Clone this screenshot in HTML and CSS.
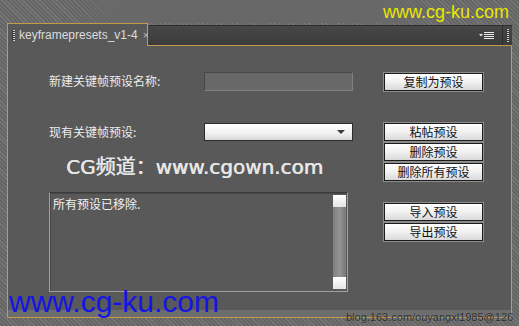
FILE: index.html
```html
<!DOCTYPE html>
<html>
<head>
<meta charset="utf-8">
<link rel="stylesheet" href="styles.css">
</head>
<body>
<div class="window">
  <div class="topstrip"></div>
  <div class="tabbar">
    <div class="tab">
      <span class="grip"></span>
      <span class="tab-title">keyframepresets_v1-4</span>
      <span class="tab-close">×</span>
    </div>
    <div class="tabfill">
      <svg class="menu-icon" width="16" height="8" viewBox="0 0 16 8">
        <polygon points="0,2 4,2 2,4.5" fill="#e8e8e8"/>
        <rect x="5" y="0" width="10" height="1" fill="#e8e8e8"/>
        <rect x="5" y="2" width="10" height="1" fill="#e8e8e8"/>
        <rect x="5" y="4" width="10" height="1" fill="#e8e8e8"/>
        <rect x="5" y="6" width="10" height="1" fill="#e8e8e8"/>
      </svg>
      <span class="sep"></span>
      <span class="grip grip-right"></span>
    </div>
  </div>
  <div class="panel">
    <div class="content">
      <div class="row row1">
        <div class="lbl">新建关键帧预设名称:</div>
        <div class="input"></div>
        <div class="btn btn-first">复制为预设</div>
      </div>
      <div class="row row2">
        <div class="lbl lbl2">现有关键帧预设:</div>
        <div class="dropdown"><span class="arrow"></span></div>
        <div class="btns">
          <div class="btn">粘帖预设</div>
          <div class="btn">删除预设</div>
          <div class="btn">删除所有预设</div>
        </div>
      </div>
      <div class="row row3">
        <div class="list">
          <div class="list-text">所有预设已移除.</div>
          <div class="scroll">
            <div class="thumb"></div>
            <div class="track"></div>
            <div class="thumb"></div>
          </div>
        </div>
        <div class="btns btns2">
          <div class="btn">导入预设</div>
          <div class="btn">导出预设</div>
        </div>
      </div>
    </div>
    <div class="foot"></div>
  </div>
</div>
<div class="wm wm-top">www.cg-ku.com</div>
<div class="wm wm-cg">CG频道：www.cgown.com</div>
<div class="wm wm-bottom">www.cg-ku.com</div>
<div class="wm wm-blog">blog.163.com/ouyangxl1985@126</div>
</body>
</html>
```
FILE: styles.css
```css
html, body {
  margin: 0;
  padding: 0;
}
body {
  width: 519px;
  height: 326px;
  overflow: hidden;
  position: relative;
  font-family: "Noto Sans CJK SC", "Liberation Sans", sans-serif;
  background-color: #6c6c6c;
  background-image: repeating-linear-gradient(45deg, #777777 0px, #777777 1px, #666666 1px, #666666 3px);
}
.window {
  padding: 0 7px 0 7px;
  height: 326px;
  box-sizing: border-box;
}
.topstrip {
  height: 23px;
  margin: 0 -7px;
  background: linear-gradient(90deg, rgba(104,104,104,0) 0px, rgba(104,104,104,0) 70px, #686868 130px, #686868 370px, rgba(104,104,104,0) 440px);
}
.tabbar {
  display: flex;
  align-items: flex-end;
  height: 23px;
}
.tab {
  flex-shrink: 0;
  width: 141px;
  height: 23px;
  box-sizing: border-box;
  border: 1px solid #c49a4c;
  border-bottom: none;
  background: #585858;
  display: flex;
  align-items: center;
  padding-left: 4px;
  white-space: nowrap;
}
.grip {
  flex-shrink: 0;
  width: 2px;
  height: 11px;
  background-image: repeating-linear-gradient(180deg, #cfcfcf 0px, #cfcfcf 1px, #3a3a3a 1px, #3a3a3a 2px);
  border-left: 1px solid #3a3a3a;
}
.tab-title {
  font-family: "Liberation Sans", sans-serif;
  font-size: 12px;
  color: #dcdcdc;
  margin-left: 4px;
}
.tab-close {
  font-family: "Liberation Sans", sans-serif;
  font-size: 11px;
  color: #bdbdbd;
  margin-left: 5px;
}
.tabfill {
  flex: 1;
  height: 21px;
  box-sizing: border-box;
  border-top: 1px solid #2e2e2e;
  border-bottom: 1px solid #c49a4c;
  background: linear-gradient(180deg, #474747, #3b3b3b);
  display: flex;
  align-items: center;
  justify-content: flex-end;
  padding-right: 3px;
}
.menu-icon {
  display: block;
  margin-right: 7px;
}
.sep {
  width: 1px;
  height: 19px;
  background: #2a2a2a;
  margin-right: 3px;
}
.grip-right {
  height: 13px;
}
.panel {
  height: 272px;
  box-sizing: border-box;
  border: 1px solid #c49a4c;
  border-top: none;
  background: #595959;
  display: flex;
  flex-direction: column;
}
.content {
  flex: 1;
  padding: 26px 0 0 41px;
}
.row {
  display: flex;
  align-items: flex-start;
}
.lbl {
  width: 155px;
  font-size: 12px;
  line-height: 18px;
  color: #ececec;
}
.input {
  width: 149px;
  height: 19px;
  box-sizing: border-box;
  background: #686868;
  border: 1px solid #808080;
  border-top-color: #484848;
  border-left-color: #484848;
}
.btn {
  width: 99px;
  height: 18px;
  box-sizing: border-box;
  border: 1px solid #1c1c1c;
  box-shadow: 0 0 0 1px #8c8c8c;
  background: linear-gradient(180deg, #ffffff 0%, #f1f1f1 50%, #d9d9d9 100%);
  font-size: 12px;
  line-height: 16px;
  text-align: center;
  color: #111111;
}
.btn-first {
  margin-left: 31px;
  margin-top: 1px;
}
.row2 {
  margin-top: 32px;
}
.dropdown {
  width: 149px;
  height: 18px;
  box-sizing: border-box;
  border: 1px solid #2c2c2c;
  background: linear-gradient(180deg, #ffffff 0%, #f0f0f0 60%, #d6d6d6 100%);
  display: flex;
  align-items: center;
  justify-content: flex-end;
  padding-right: 7px;
}
.arrow {
  width: 0;
  height: 0;
  border-left: 4px solid transparent;
  border-right: 4px solid transparent;
  border-top: 4px solid #3a3a3a;
}
.btns {
  display: flex;
  flex-direction: column;
  gap: 2px;
  margin-left: 31px;
}
.row3 {
  margin-top: 11px;
}
.list {
  width: 299px;
  height: 100px;
  box-sizing: border-box;
  border: 1px solid #a0a0a0;
  border-top-color: #3a3a3a;
  box-shadow: inset 1px 1px 0 #474747;
  display: flex;
}
.list-text {
  flex: 1;
  font-size: 12px;
  line-height: 16px;
  color: #f2f2f2;
  padding: 3px 0 0 3px;
}
.scroll {
  width: 13px;
  margin: 2px 1px 2px 0;
  display: flex;
  flex-direction: column;
}
.thumb {
  height: 12px;
  background: linear-gradient(180deg, #ffffff, #e4e4e4);
}
.track {
  flex: 1;
  background: linear-gradient(90deg, #7f7f7f, #959595 50%, #777777);
}
.btns2 {
  margin-left: 36px;
  margin-top: 11px;
}
.foot {
  height: 7px;
  background: #6d6d6d;
}
.wm {
  position: absolute;
  white-space: nowrap;
  font-family: "Liberation Sans", sans-serif;
}
.wm-top {
  left: 383px;
  top: 2px;
  font-size: 18px;
  color: #e8e800;
}
.wm-cg {
  left: 66px;
  top: 151px;
  font-family: "DejaVu Sans", "Noto Sans CJK SC", sans-serif;
  font-size: 20px;
  color: #e6e6e6;
  text-shadow: 0.6px 0 0 #e6e6e6;
}
.wm-bottom {
  left: 9px;
  top: 285px;
  font-size: 30px;
  color: #1414e6;
}
.wm-blog {
  left: 346px;
  top: 311px;
  font-size: 11px;
  color: #2a2a2a;
  text-shadow: 0 0 1px #9a9a9a;
}
```
